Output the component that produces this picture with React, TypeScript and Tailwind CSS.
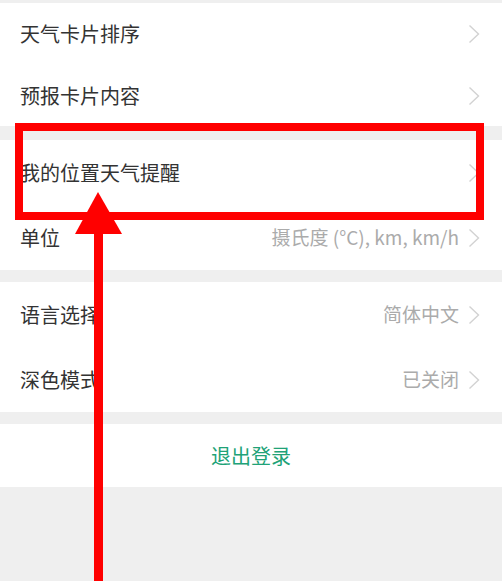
interface Row {
  label: string;
  value?: string;
}

const sections: Row[][] = [
  [{ label: "天气卡片排序" }, { label: "预报卡片内容" }],
  [{ label: "我的位置天气提醒" }, { label: "单位", value: "摄氏度 (°C), km, km/h" }],
  [
    { label: "语言选择", value: "简体中文" },
    { label: "深色模式", value: "已关闭" },
  ],
];

function Chevron() {
  return (
    <svg width="12" height="20" viewBox="0 0 12 20" className="shrink-0">
      <polyline points="1.5,1.5 10.5,10 1.5,18.5" fill="none" stroke="#d2d2d2" strokeWidth="1.4" />
    </svg>
  );
}

function SettingRow({ row, h }: { row: Row; h: string }) {
  return (
    <div className={`flex items-center justify-between pl-5 pr-[22px] ${h}`}>
      <span className="text-[20px] text-[#333]">{row.label}</span>
      <div className="flex items-center gap-[9px]">
        {row.value && <span className="text-[19px] text-[#ababab]">{row.value}</span>}
        <Chevron />
      </div>
    </div>
  );
}

export default function App() {
  return (
    <div
      className="relative w-[502px] h-[581px] overflow-hidden bg-[#efefef]"
      style={{ fontFamily: '"Noto Sans CJK SC", "Noto Sans", sans-serif' }}
    >
      <div className="flex flex-col pt-[3px]">
        {/* settings groups */}
        <div className="bg-white">
          <SettingRow row={sections[0][0]} h="h-[62px]" />
          <SettingRow row={sections[0][1]} h="h-[61px]" />
        </div>
        <div className="bg-white mt-[14px]">
          {sections[1].map((r) => (
            <SettingRow key={r.label} row={r} h="h-[65px]" />
          ))}
        </div>
        <div className="bg-white mt-[12px]">
          {sections[2].map((r) => (
            <SettingRow key={r.label} row={r} h="h-[65px]" />
          ))}
        </div>
        <div className="bg-white mt-[12px] h-[63px] flex items-center justify-center">
          <span className="text-[20px] text-[#20a277]">退出登录</span>
        </div>
      </div>

      {/* highlight box */}
      <div className="absolute left-[15px] top-[123px] w-[469px] h-[97px] border-[8px] border-[#f00]" />

      {/* pointer arrow */}
      <svg className="absolute left-0 top-0" width="502" height="581" viewBox="0 0 502 581">
        <polygon points="98,192 122,234 75,234" fill="#f00" />
        <rect x="94" y="232" width="9" height="349" fill="#f00" />
      </svg>
    </div>
  );
}
